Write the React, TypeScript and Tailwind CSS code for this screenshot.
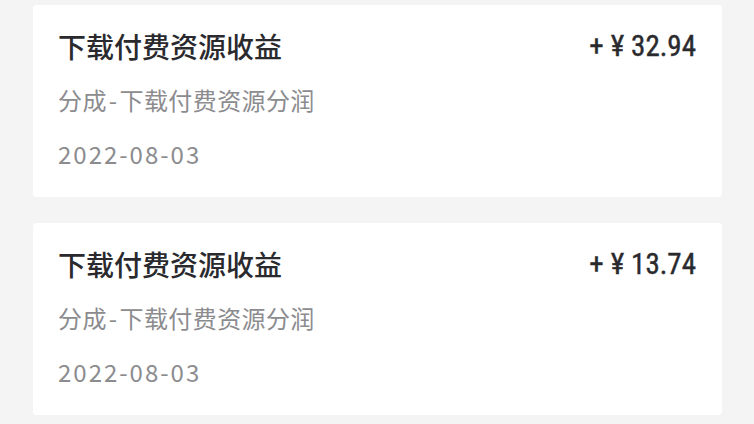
import React from "react";

const items = [
  { title: "下载付费资源收益", sub: "分成-下载付费资源分润", date: "2022-08-03", amount: "32.94" },
  { title: "下载付费资源收益", sub: "分成-下载付费资源分润", date: "2022-08-03", amount: "13.74" },
];

const cjk = { fontFamily: '"Noto Sans CJK SC", "Noto Sans", sans-serif' };

export default function App() {
  return (
    <div className="w-[754px] h-[424px] bg-[#f4f4f4] overflow-hidden pt-[5px] pl-[33px] pr-[32px] flex flex-col gap-[26px]">
      {items.map((it, i) => (
        <div key={i} className="bg-white rounded-[4px] h-[192px] flex flex-col pl-[25px] pr-[26px] pt-[24px]" style={cjk}>
          <div className="flex items-start justify-between">
            <div className="text-[28px] leading-[34px] font-medium text-[#2a2a2e]">{it.title}</div>
            <div
              className="text-[29px] leading-[34px] font-normal text-[#2a2a2e] flex items-center gap-[7px] [-webkit-text-stroke:0.4px_#2a2a2e]"
              style={{ fontFamily: '"Liberation Sans Narrow", "Roboto Condensed", Roboto, sans-serif' }}
            >
              <span>+</span>
              <span>¥</span>
              <span>{it.amount}</span>
            </div>
          </div>
          <div className="mt-[22px] text-[24px] leading-[30px] text-[#8c8c8f] tracking-[0.4px]">分成<span className="inline-block px-[2px]">-</span>下载付费资源分润</div>
          <div className="mt-[24px] text-[24px] leading-[30px] text-[#8c8c8f] tracking-[2px]">{it.date}</div>
        </div>
      ))}
    </div>
  );
}
